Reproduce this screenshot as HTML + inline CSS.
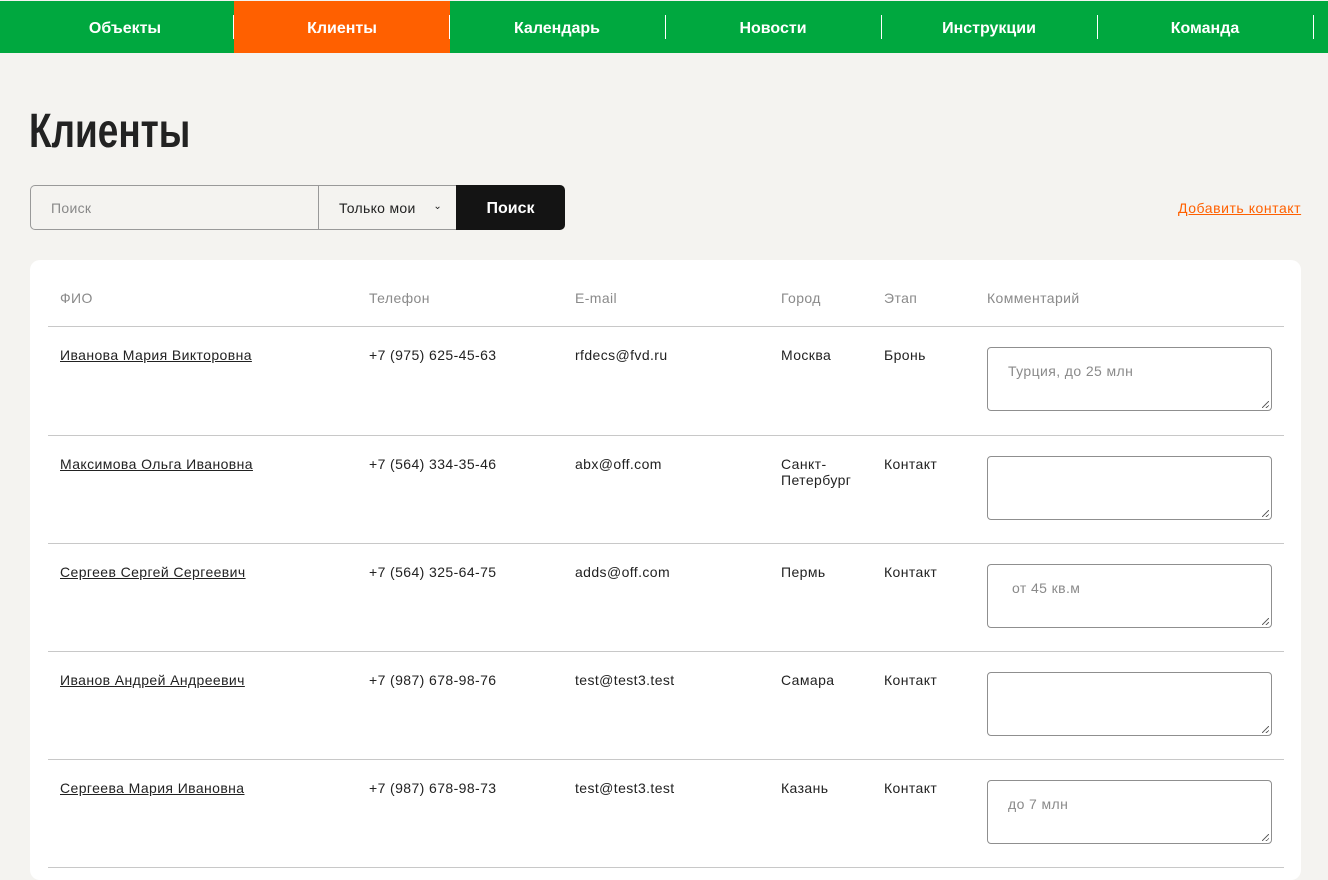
<!DOCTYPE html>
<html><head><meta charset="utf-8"><style>
*{box-sizing:border-box;margin:0;padding:0}
body{width:1328px;height:869px;overflow:hidden;background:#f4f3f0;font-family:"Liberation Sans",sans-serif;color:#222;position:relative}
.nav{position:absolute;left:0;top:1px;width:1328px;height:52px;background:#00a83f}
.nav div{position:absolute;top:2px;height:50px;width:216px;line-height:52px;text-align:center;color:#fff;font-weight:bold;font-size:16px}
.nav .sep{position:absolute;top:14px;width:1px;height:24px;background:#fff}
.nav .act{background:#ff6000;top:0;height:52px;line-height:56px;overflow:hidden}
h1{position:absolute;left:29px;top:104px;font-family:"Liberation Sans Narrow","Liberation Sans",sans-serif;font-weight:bold;font-size:48px;color:#222;transform:scaleX(0.77);transform-origin:left}
.search{position:absolute;left:30px;top:185px;width:289px;height:45px;border:1px solid #999;border-right:none;border-radius:5px 0 0 5px;padding-left:20px;line-height:45px;font-size:14px;color:#888;letter-spacing:0.3px}
.sel{position:absolute;left:318px;top:185px;width:139px;height:45px;border:1px solid #999;line-height:45px;padding-left:20px;font-size:14px;color:#222;letter-spacing:0.3px}
.sel span{position:absolute;right:14px;top:-2px;font-size:10px}
.btn{position:absolute;left:456px;top:185px;width:109px;height:45px;background:#141414;color:#fff;border-radius:0 5px 5px 0;text-align:center;line-height:47px;font-weight:bold;font-size:16px}
.add{position:absolute;left:1178px;top:200px;font-size:14px;color:#ff6000;text-decoration:underline;letter-spacing:0.55px}
.card{position:absolute;left:30px;top:260px;width:1271px;height:620px;background:#fff;border-radius:10px}
.t{position:absolute;font-size:14px;letter-spacing:0.4px}
.h{color:#8a8a8a;top:290px}
.line{position:absolute;left:48px;width:1236px;height:1px;background:#c8c8c8}
.ta{position:absolute;left:987px;width:285px;height:64px;border:1px solid #8f8f8f;border-radius:4px;padding:15px 20px;font-size:14px;color:#8a8a8a;letter-spacing:0.4px}
.ta:after{content:"";position:absolute;right:2px;bottom:2px;width:7px;height:7px;background:linear-gradient(135deg,transparent 45%,#666 45%,#666 55%,transparent 55%,transparent 75%,#666 75%,#666 85%,transparent 85%)}
u{text-decoration:underline}
</style></head><body>
<div class="nav">
<div style="left:17px">Объекты</div><div class="sep" style="left:233px"></div>
<div class="act" style="left:234px">Клиенты</div><div class="sep" style="left:449px"></div>
<div style="left:449px">Календарь</div><div class="sep" style="left:665px"></div>
<div style="left:665px">Новости</div><div class="sep" style="left:881px"></div>
<div style="left:881px">Инструкции</div><div class="sep" style="left:1097px"></div>
<div style="left:1097px">Команда</div><div class="sep" style="left:1313px"></div>
</div>
<h1>Клиенты</h1>
<div class="search">Поиск</div>
<div class="sel">Только мои<span>&#8964;</span></div>
<div class="btn">Поиск</div>
<div class="add">Добавить контакт</div>
<div class="card"></div>
<div class="t h" style="left:60px">ФИО</div>
<div class="t h" style="left:369px">Телефон</div>
<div class="t h" style="left:575px">E-mail</div>
<div class="t h" style="left:781px">Город</div>
<div class="t h" style="left:884px">Этап</div>
<div class="t h" style="left:987px">Комментарий</div>
<div class="line" style="top:326px"></div>

<div class="t" style="left:60px;top:347px"><u>Иванова Мария Викторовна</u></div>
<div class="t" style="left:369px;top:347px">+7 (975) 625-45-63</div>
<div class="t" style="left:575px;top:347px">rfdecs@fvd.ru</div>
<div class="t" style="left:781px;top:347px">Москва</div>
<div class="t" style="left:884px;top:347px">Бронь</div>
<div class="ta" style="top:347px">Турция, до 25 млн</div>
<div class="line" style="top:435px"></div>

<div class="t" style="left:60px;top:456px"><u>Максимова Ольга Ивановна</u></div>
<div class="t" style="left:369px;top:456px">+7 (564) 334-35-46</div>
<div class="t" style="left:575px;top:456px">abx@off.com</div>
<div class="t" style="left:781px;top:456px;line-height:16px">Санкт-<br>Петербург</div>
<div class="t" style="left:884px;top:456px">Контакт</div>
<div class="ta" style="top:456px"></div>
<div class="line" style="top:543px"></div>

<div class="t" style="left:60px;top:564px"><u>Сергеев Сергей Сергеевич</u></div>
<div class="t" style="left:369px;top:564px">+7 (564) 325-64-75</div>
<div class="t" style="left:575px;top:564px">adds@off.com</div>
<div class="t" style="left:781px;top:564px">Пермь</div>
<div class="t" style="left:884px;top:564px">Контакт</div>
<div class="ta" style="top:564px;padding-left:24px">от 45 кв.м</div>
<div class="line" style="top:651px"></div>

<div class="t" style="left:60px;top:672px"><u>Иванов Андрей Андреевич</u></div>
<div class="t" style="left:369px;top:672px">+7 (987) 678-98-76</div>
<div class="t" style="left:575px;top:672px">test@test3.test</div>
<div class="t" style="left:781px;top:672px">Самара</div>
<div class="t" style="left:884px;top:672px">Контакт</div>
<div class="ta" style="top:672px"></div>
<div class="line" style="top:759px"></div>

<div class="t" style="left:60px;top:780px"><u>Сергеева Мария Ивановна</u></div>
<div class="t" style="left:369px;top:780px">+7 (987) 678-98-73</div>
<div class="t" style="left:575px;top:780px">test@test3.test</div>
<div class="t" style="left:781px;top:780px">Казань</div>
<div class="t" style="left:884px;top:780px">Контакт</div>
<div class="ta" style="top:780px">до 7 млн</div>
<div class="line" style="top:867px"></div>
</body></html>
